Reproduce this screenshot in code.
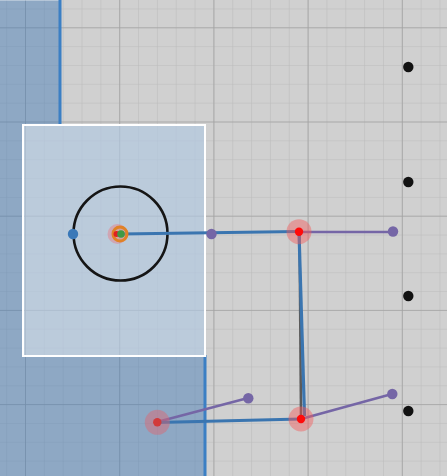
import React from "react";

const GRID = 18.84;

const blueDark = "#3a75b0";
const purple = "#7566a6";

const Point = ({ x, y }: { x: number; y: number }) => (
  <g>
    <circle cx={x} cy={y} r={12.5} fill="rgba(245,90,90,0.45)" />
    <circle cx={x} cy={y} r={4.2} fill="#ff0a0a" />
  </g>
);

const Handle = ({ x, y, color = purple }: { x: number; y: number; color?: string }) => (
  <circle cx={x} cy={y} r={5.2} fill={color} />
);

export default function App() {
  const anchors = [67, 182, 296, 411];

  return (
    <div className="relative w-[447px] h-[476px] overflow-hidden bg-[#d0d0d0]">
      <svg width="447" height="476" viewBox="0 0 447 476" className="block">
        <defs>
          <pattern id="minor" width={GRID} height={GRID} patternUnits="userSpaceOnUse" x={6.16} y={8.46}>
            <path d={`M ${GRID} 0 L 0 0 0 ${GRID}`} fill="none" stroke="#bcbcbc" strokeWidth="1.2" />
          </pattern>
          <pattern id="major" width={GRID * 5} height={GRID * 5} patternUnits="userSpaceOnUse" x={25} y={27.3}>
            <path d={`M ${GRID * 5} 0 L 0 0 0 ${GRID * 5}`} fill="none" stroke="#a2a2a2" strokeWidth="1.6" />
          </pattern>
        </defs>

        {/* grid */}
        <rect width="447" height="476" fill="url(#minor)" />
        <rect width="447" height="476" fill="url(#major)" />

        {/* region */}
        <polygon points="0,0 60,0 60,126 205,126 205,476 0,476" fill="rgba(61,119,181,0.45)" />
        <line x1="0" y1="0.5" x2="60" y2="0.5" stroke="rgba(255,255,255,0.35)" strokeWidth="1" />
        <line x1="60" y1="0" x2="60" y2="125" stroke="#3b7fc4" strokeWidth="3" />
        <line x1="205" y1="355" x2="205" y2="476" stroke="#3b7fc4" strokeWidth="3" />

        {/* selection box */}
        <rect x="23" y="125" width="182" height="231" fill="rgba(255,255,255,0.4)" stroke="#ffffff" strokeWidth="2" />

        {/* circle tool */}
        <circle cx="120.5" cy="233.5" r="47" fill="none" stroke="#151515" strokeWidth="2.6" />
        <Handle x={73} y={234} color="#3a78b8" />

        {/* edges */}
        <line x1="299" y1="232" x2="393" y2="232" stroke={purple} strokeWidth="2.6" />
        <line x1="121" y1="234" x2="299" y2="231.5" stroke={blueDark} strokeWidth="3.2" />
        <Handle x={211.5} y={234} />
        <Handle x={393} y={231.5} />

        <line x1="299.5" y1="232" x2="301" y2="418" stroke="#5a5a5a" strokeWidth="2.5" />
        <line x1="299" y1="232" x2="304.5" y2="416" stroke={blueDark} strokeWidth="3.2" />

        <line x1="157" y1="422" x2="248" y2="398" stroke={purple} strokeWidth="2.6" />
        <line x1="301" y1="419" x2="392" y2="394" stroke={purple} strokeWidth="2.6" />
        <line x1="157" y1="422.5" x2="301" y2="419" stroke={blueDark} strokeWidth="3.2" />
        <Handle x={248.3} y={398.3} />
        <Handle x={392.3} y={394} />

        {/* nodes */}
        <Point x={299} y={231.7} />
        <Point x={301} y={419} />
        <g>
          <circle cx={157.3} cy={422.3} r={12.5} fill="rgba(225,100,110,0.45)" />
          <circle cx={157.3} cy={422.3} r={4.2} fill="#d23a3a" />
        </g>

        {/* center marker */}
        <circle cx="117.5" cy="234" r="10" fill="rgba(240,110,120,0.4)" />
        <circle cx="120" cy="234" r="7" fill="rgba(220,160,120,0.3)" stroke="#e08226" strokeWidth="3" />
        <circle cx="116.5" cy="234" r="3" fill="#e02020" />
        <circle cx="121" cy="234" r="3.8" fill="#3f9a45" />

        {/* anchors */}
        {anchors.map((y) => (
          <circle key={y} cx="408.3" cy={y} r="5.2" fill="#121212" />
        ))}
      </svg>
    </div>
  );
}
